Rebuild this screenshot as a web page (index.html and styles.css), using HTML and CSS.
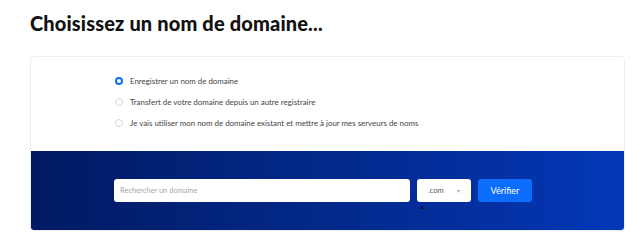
FILE: index.html
```html
<!DOCTYPE html>
<html lang="fr">
<head>
    <meta charset="UTF-8">
    <meta name="viewport" content="width=device-width, initial-scale=1.0">
    <title>Choisissez un nom de domaine</title>
    <link rel="stylesheet" href="styles.css">
</head>
<body>
    <div class="page">
        <h1 class="page-title">Choisissez un nom de domaine...</h1>

        <div class="domain-card">
            <div class="domain-options">
                <label class="option">
                    <input type="radio" name="domain" checked>
                    <span>Enregistrer un nom de domaine</span>
                </label>
                <label class="option">
                    <input type="radio" name="domain">
                    <span>Transfert de votre domaine depuis un autre registraire</span>
                </label>
                <label class="option">
                    <input type="radio" name="domain">
                    <span>Je vais utiliser mon nom de domaine existant et mettre à jour mes serveurs de noms</span>
                </label>
            </div>

            <div class="domain-search">
                <input class="search-input" type="text" placeholder="Rechercher un domaine">
                <div class="tld-select">
                    <span>.com</span>
                    <span class="tld-caret">▾</span>
                    <span class="tld-pointer"></span>
                </div>
                <button class="btn-check">Vérifier</button>
            </div>
        </div>
    </div>
</body>
</html>
```

FILE: styles.css
```css
* {
    margin: 0;
    padding: 0;
    box-sizing: border-box;
}

body {
    font-family: 'Lato', 'Open Sans', sans-serif;
    background: #fff;
    color: #333;
}

.page {
    padding: 9px 17px 0 30px;
}

.page-title {
    font-size: 20px;
    font-weight: 900;
    color: #111;
    line-height: 28px;
    letter-spacing: 0.15px;
}

.domain-card {
    margin-top: 19px;
    border: 1px solid #eeeeee;
    border-radius: 4px;
    overflow: hidden;
}

.domain-options {
    display: flex;
    flex-direction: column;
    gap: 9px;
    padding: 18px 0 22px 84px;
}

.option {
    display: flex;
    align-items: center;
    gap: 7px;
    font-size: 7.9px;
    color: #444;
    height: 12px;
}

.option input {
    appearance: none;
    width: 8px;
    height: 8px;
    border: 1px solid #d8d8d8;
    border-radius: 50%;
    background: #fff;
}

.option input:checked {
    border: 2.5px solid #0d6efd;
}

.domain-search {
    display: flex;
    align-items: center;
    gap: 7px;
    height: 79px;
    padding-left: 83px;
    background: linear-gradient(90deg, #011a62 0%, #02298a 50%, #0437b8 100%);
}

.search-input {
    width: 296px;
    height: 23px;
    border: none;
    border-radius: 3px;
    padding: 0 6px;
    font-family: inherit;
    font-size: 7.5px;
    outline: none;
}

.search-input::placeholder {
    color: #a8a8a8;
}

.tld-select {
    position: relative;
    width: 54px;
    height: 23px;
    background: #fff;
    border-radius: 3px;
    display: flex;
    align-items: center;
    justify-content: space-between;
    padding: 0 11px 0 11px;
    font-size: 7.5px;
    color: #555;
}

.tld-caret {
    font-size: 6px;
    color: #aaa;
}

.tld-pointer {
    position: absolute;
    left: 3px;
    top: 27px;
    border-left: 2.5px solid transparent;
    border-right: 2.5px solid transparent;
    border-bottom: 3px solid #111;
}

.btn-check {
    width: 54px;
    height: 23px;
    border: none;
    border-radius: 3px;
    background: #0d6efd;
    color: #fff;
    font-family: inherit;
    font-size: 9px;
}
```
